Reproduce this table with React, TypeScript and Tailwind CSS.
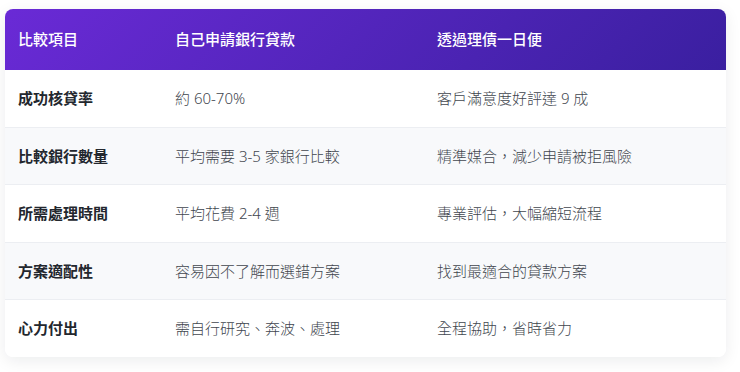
type Row = { item: string; self: string; us: string };

const rows: Row[] = [
  { item: "成功核貸率", self: "約 60-70%", us: "客戶滿意度好評達 9 成" },
  { item: "比較銀行數量", self: "平均需要 3-5 家銀行比較", us: "精準媒合，減少申請被拒風險" },
  { item: "所需處理時間", self: "平均花費 2-4 週", us: "專業評估，大幅縮短流程" },
  { item: "方案適配性", self: "容易因不了解而選錯方案", us: "找到最適合的貸款方案" },
  { item: "心力付出", self: "需自行研究、奔波、處理", us: "全程協助，省時省力" },
];

export default function App() {
  return (
    <div className="min-h-[372px] w-[740px] bg-white pl-[5px] pt-[9px] font-['Noto_Sans','Noto_Sans_CJK_TC',sans-serif]">
      <div className="w-[721px] overflow-hidden rounded-lg bg-white shadow-[0_4px_16px_rgba(15,23,42,0.08)]">
        <table className="w-full table-fixed border-collapse text-[15px]">
          <colgroup>
            <col className="w-[157px]" />
            <col className="w-[262px]" />
            <col />
          </colgroup>
          <thead>
            <tr className="bg-linear-135 from-[#6a2ad6] to-[#3a1fa0] text-white">
              <th className="h-[61px] pl-[13px] text-left font-medium">比較項目</th>
              <th className="h-[61px] pl-[13px] text-left font-medium">自己申請銀行貸款</th>
              <th className="h-[61px] pl-[13px] text-left font-medium">透過理債一日便</th>
            </tr>
          </thead>
          <tbody>
            {rows.map((r, i) => (
              <tr
                key={r.item}
                className={`${i % 2 === 1 ? "bg-[#f8f9fb]" : "bg-white"} ${
                  i < rows.length - 1 ? "border-b border-[#eceef2]" : ""
                }`}
              >
                <td className="h-[57.4px] pl-[13px] font-semibold text-[#23272e]">{r.item}</td>
                <td className="h-[57.4px] pl-[13px] font-light text-[#41464e]">{r.self}</td>
                <td className="h-[57.4px] pl-[13px] font-light text-[#41464e]">{r.us}</td>
              </tr>
            ))}
          </tbody>
        </table>
      </div>
    </div>
  );
}
